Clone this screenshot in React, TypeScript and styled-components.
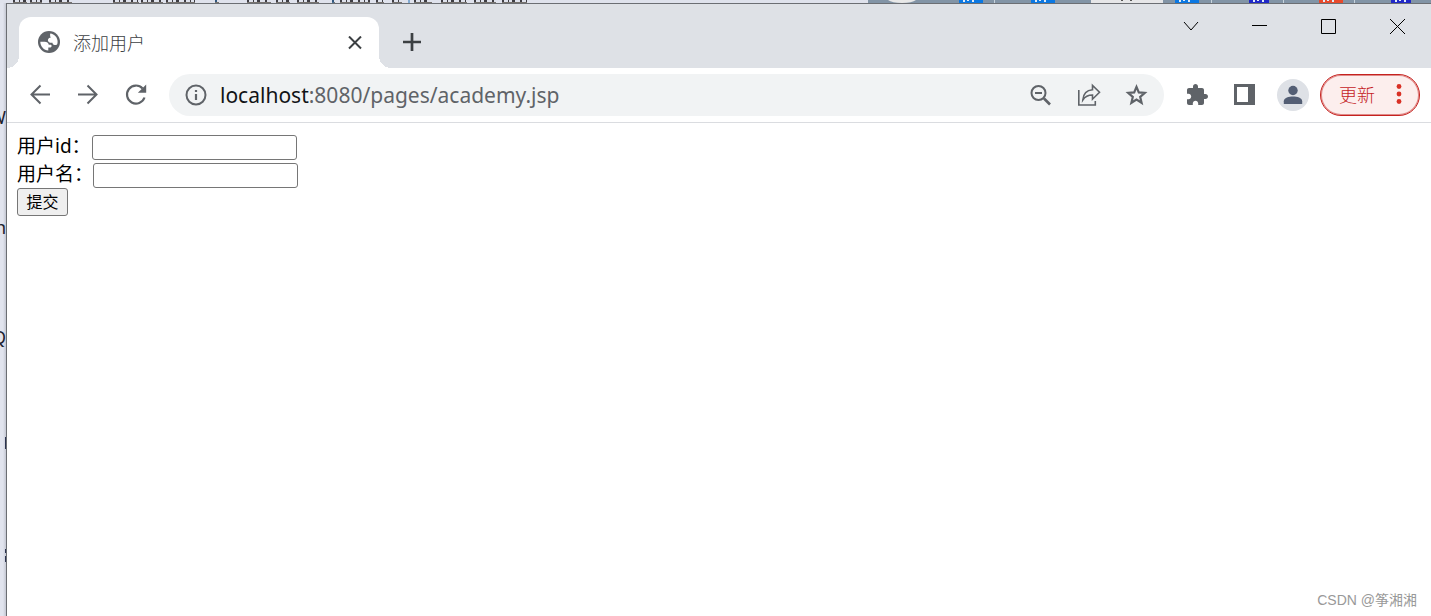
import React from "react";
import styled, { createGlobalStyle } from "styled-components";

const GlobalStyle = createGlobalStyle`
  * { box-sizing: border-box; }
  html, body { margin: 0; }
  body {
    font-family: "Noto Sans", "Noto Sans CJK SC", sans-serif;
    background: #dfe2ec;
  }
  button { font: inherit; }
`;

const Desktop = styled.div`
  min-height: 100vh;
  display: grid;
  grid-template: 3px 1fr / 6px minmax(0, 1fr);
  background: #dfe2ec;
`;

const TopStrip = styled.div`
  grid-column: 1 / -1;
  display: flex;
  justify-content: space-between;
  overflow: hidden;
`;

const StripDrawing = styled.svg`
  display: block;
  height: 3px;
  flex: none;
`;

const SideStrip = styled.div`
  display: flex;
  flex-direction: column;
  align-items: flex-end;
  overflow: hidden;
  padding-top: 100px;
  background: linear-gradient(90deg, #e1e4ee 50%, #c4c7d2);
  color: #1c2230;
  font-size: 18px;
  line-height: 28px;
`;

const SideGlyph = styled.span`
  margin-bottom: 82px;
`;

const SideMarks = styled.svg`
  display: block;
  flex: none;
`;

const Window = styled.div`
  display: flex;
  flex-direction: column;
  min-width: 0;
  border-top: 1px solid #6b6e73;
  border-left: 1px solid #6b6e73;
  background: #fff;
`;

const TabStrip = styled.header`
  display: flex;
  height: 64px;
  padding-left: 12px;
  background: #dee1e6;
`;

const Tab = styled.div`
  position: relative;
  display: flex;
  align-items: center;
  width: 360px;
  height: 51px;
  margin-top: 13px;
  padding: 0 14px 0 18px;
  border-radius: 12px 12px 0 0;
  background: #fff;
  color: #3c4043;

  &::before,
  &::after {
    content: "";
    position: absolute;
    bottom: 0;
    width: 12px;
    height: 12px;
  }
  &::before {
    right: 100%;
    background: radial-gradient(circle at 0 0, transparent 12px, #fff 12px);
  }
  &::after {
    left: 100%;
    background: radial-gradient(circle at 100% 0, transparent 12px, #fff 12px);
  }
`;

const TabTitle = styled.span`
  flex: 1;
  margin-left: 12px;
  font-size: 18px;
  font-weight: 300;
  line-height: 24px;
`;

const IconButton = styled.button<{ $size?: number }>`
  display: flex;
  flex: none;
  align-items: center;
  justify-content: center;
  width: ${(p) => p.$size ?? 32}px;
  height: ${(p) => p.$size ?? 32}px;
  padding: 0;
  border: 0;
  background: none;
  color: #5f6368;
`;

const NewTab = styled(IconButton)`
  margin: 22px 0 0 17px;
  color: #3c4043;
`;

const WindowControls = styled.div`
  display: flex;
  height: 45px;
  margin: 0 -1px 0 auto;
`;

const WindowControl = styled.button`
  display: flex;
  align-items: center;
  justify-content: center;
  width: 69px;
  padding: 0;
  border: 0;
  background: none;
  color: #000;
`;

const Toolbar = styled.nav`
  display: flex;
  align-items: center;
  height: 55px;
  padding: 0 11px 0 17px;
  border-bottom: 1px solid #dadce0;
`;

const NavGroup = styled.div`
  display: flex;
  gap: 16px;
`;

const AddressBar = styled.div`
  display: flex;
  flex: 1;
  align-items: center;
  min-width: 0;
  height: 42px;
  margin: 0 17px;
  padding: 0 11px;
  border-radius: 21px;
  background: #f1f3f4;
`;

const Url = styled.span`
  flex: 1;
  min-width: 0;
  margin-left: 8px;
  overflow: hidden;
  color: #5f6368;
  font-size: 21px;
  line-height: 30px;
  white-space: nowrap;
`;

const Host = styled.span`
  color: #111417;
`;

const Avatar = styled(IconButton)`
  border-radius: 50%;
  background: #dee1e6;
  color: #535e74;
`;

const UpdateButton = styled.button`
  display: flex;
  align-items: center;
  justify-content: space-between;
  width: 100px;
  height: 42px;
  margin-left: 11px;
  padding: 0 17px 2px 18px;
  border: 1px solid #c5221f;
  border-radius: 21px;
  background: #fceeed;
  box-shadow: inset 0 0 0 1px #e08a88;
  color: #c5221f;
  font-size: 18px;
  font-weight: 300;
`;

const Page = styled.main`
  display: flex;
  flex: 1;
  flex-direction: column;
  padding: 12px 14px 4px 10px;
  color: #000;
  font-size: 19px;
`;

const Fields = styled.div`
  display: flex;
  flex-direction: column;
  gap: 3px;
`;

const Row = styled.div`
  display: flex;
`;

const FieldLabel = styled.label<{ $width: number }>`
  width: ${(p) => p.$width}px;
  line-height: 23px;
  white-space: nowrap;
`;

const TextInput = styled.input`
  width: 205px;
  height: 25px;
  padding: 1px 2px;
  border: 1px solid #767676;
  border-radius: 3px;
  background: #fff;
  font: inherit;
  font-size: 16px;
`;

const Submit = styled.button`
  width: 51px;
  height: 28px;
  padding: 0;
  border: 1px solid #767676;
  border-radius: 3px;
  background: #efefef;
  color: #000;
  font-size: 16px;
  line-height: 24px;
`;

const Watermark = styled.footer`
  margin-top: auto;
  align-self: flex-end;
  color: #999;
  font-family: "Liberation Sans", "Noto Sans CJK SC", sans-serif;
  font-size: 14px;
  line-height: 24px;
`;

const textRemnants: [number, number][] = [
  [13, 14], [30, 12], [49, 23], [113, 26], [141, 22], [166, 29],
  [215, 4], [247, 24], [276, 14], [297, 22], [332, 3], [340, 30],
  [376, 8], [392, 10], [414, 18], [441, 26], [474, 22], [502, 25],
];

const favicons: [number, number, string][] = [
  [91, 24, "#0b78e3"], [163, 24, "#0b78e3"], [307, 24, "#0b78e3"],
  [381, 20, "#2028c8"], [451, 24, "#e84a2c"], [523, 20, "#2028c8"],
];

function BackgroundWindows() {
  return (
    <TopStrip aria-hidden="true">
      <StripDrawing width="530" viewBox="0 0 530 3">
        {textRemnants.map(([x, w]) => (
          <g key={x}>
            <path d={`M${x} 2.5h${w}`} stroke="#77736f" />
            <path d={`M${x} 1h${w}`} stroke="#3e3d43" strokeWidth="2" strokeDasharray="2 4 1 3 3 5" />
          </g>
        ))}
        <path d="M333 0v3M216 0v2M409 0v3" stroke="#2473b8" />
      </StripDrawing>
      <StripDrawing width="563" viewBox="0 0 563 3">
        <path d="M0 0h563v3H0z" fill="#8294a6" />
        <path d="M20 0h28q-4 3-14 3T20 0z" fill="#e8e8e8" />
        <path d="M223 0h72v3h-72z" fill="#e6e6e8" />
        {favicons.map(([x, w, fill]) => (
          <g key={x}>
            <path d={`M${x} 0h${w}v3h-${w}z`} fill={fill} />
            <path d={`M${x + 5} 0v2m4-2v1m5-1v2`} stroke="#dfeaf6" strokeWidth="2" />
          </g>
        ))}
        <path d="M126.500 0v3M343.500 0v3M415.500 0v3M486.500 0v3" stroke="#c7d3dc" />
        <path d="M253 .5h2m7 0h2" stroke="#555" />
      </StripDrawing>
    </TopStrip>
  );
}

export default function App() {
  return (
    <>
      <GlobalStyle />
      <Desktop>
        <BackgroundWindows />
        <SideStrip aria-hidden="true">
          <SideGlyph>W</SideGlyph>
          <SideGlyph>n</SideGlyph>
          <SideGlyph>Q</SideGlyph>
          <SideMarks width="6" height="140" viewBox="0 0 6 140">
            <path d="M5.500 4v12M5.500 116v4m0 3v6" stroke="#2b3350" />
          </SideMarks>
        </SideStrip>
        <Window>
          <TabStrip>
            <Tab>
              <svg width="24" height="24" viewBox="0 0 24 24" aria-hidden="true">
                <circle cx="12" cy="11" r="11" fill="#5f6368" />
                <path
                  fill="#fff"
                  d="M13.300 2.500C17.500 3 20.600 6.500 20.600 10.600c0 1-.1 1.800-.4 2.600-.8.700-1.700 1-2.600.800-1.400-.2-2-1-2.100-2.300-1.400.1-2.600 0-3.500-.5-1.100-.7-1.400-2-.8-3.200.5-.9 1.400-1.200 2.500-1.200-.5-1.500-.9-3-.4-4.300zM3.300 10.800h4.300c2.300 0 3.900 1 4.200 3h1.600c.9 0 1.300.6 1.200 1.300-.1 1-.9 1.500-2 1.500h-1.300v3C7 19.300 3.300 15.600 3.300 10.800z"
                />
              </svg>
              <TabTitle>添加用户</TabTitle>
              <IconButton $size={20} aria-label="关闭标签页">
                <svg width="14" height="14" viewBox="0 0 14 14" fill="none" stroke="#3c4043" strokeWidth="2">
                  <path d="m1 .500 12 12M13 .500 1 12.500" />
                </svg>
              </IconButton>
            </Tab>
            <NewTab aria-label="新标签页">
              <svg width="18" height="18" viewBox="0 0 18 18" stroke="currentColor" strokeWidth="2.700">
                <path d="M9 0v18M0 9h18" />
              </svg>
            </NewTab>
            <WindowControls>
              <WindowControl aria-label="搜索标签页">
                <svg width="16" height="16" viewBox="0 0 16 16" fill="none" stroke="currentColor">
                  <path d="m1 3 7 8 7-8" />
                </svg>
              </WindowControl>
              <WindowControl aria-label="最小化">
                <svg width="15" height="15" viewBox="0 0 15 15" stroke="currentColor">
                  <path d="M0 6.500h15" />
                </svg>
              </WindowControl>
              <WindowControl aria-label="最大化">
                <svg width="15" height="15" viewBox="0 0 15 15" fill="none" stroke="currentColor">
                  <path d="M.5.500h14v14H.5z" />
                </svg>
              </WindowControl>
              <WindowControl aria-label="关闭">
                <svg width="15" height="15" viewBox="0 0 15 15" stroke="currentColor">
                  <path d="m0 0 15 15M15 0 0 15" />
                </svg>
              </WindowControl>
            </WindowControls>
          </TabStrip>
          <Toolbar>
            <NavGroup>
              <IconButton aria-label="后退">
                <svg width="22" height="22" viewBox="0 0 22 22" fill="none" stroke="currentColor" strokeWidth="2">
                  <path d="M21 10.500H3M11.500 1.500l-9 9 9 9" />
                </svg>
              </IconButton>
              <IconButton aria-label="前进">
                <svg width="22" height="22" viewBox="0 0 22 22" fill="none" stroke="currentColor" strokeWidth="2">
                  <path d="M1 10.500h18M10.500 1.500l9 9-9 9" />
                </svg>
              </IconButton>
              <IconButton aria-label="重新加载">
                <svg width="24" height="24" viewBox="0 0 24 24">
                  <path d="M20.500 14.500A9 9 0 1 1 18.600 5.400" fill="none" stroke="currentColor" strokeWidth="2.200" />
                  <path d="M22.200 1.500v8.300h-8.300z" fill="currentColor" />
                </svg>
              </IconButton>
            </NavGroup>
            <AddressBar>
              <IconButton aria-label="网站信息">
                <svg width="22" height="22" viewBox="0 0 22 22" fill="none" stroke="currentColor" strokeWidth="2">
                  <circle cx="11" cy="11" r="9.500" />
                  <path d="M11 10v6M11 6v2" strokeWidth="2.200" />
                </svg>
              </IconButton>
              <Url>
                <Host>localhost</Host>:8080/pages/academy.jsp
              </Url>
              <NavGroup>
                <IconButton aria-label="缩放">
                  <svg width="22" height="22" viewBox="0 0 22 22" fill="none" stroke="currentColor" strokeWidth="2">
                    <circle cx="8.500" cy="9" r="7" />
                    <path d="M5 9h7" />
                    <path d="m14 14.500 6 6" strokeWidth="2.600" />
                  </svg>
                </IconButton>
                <IconButton aria-label="分享">
                  <svg width="24" height="24" viewBox="0 0 24 24" fill="none" stroke="currentColor" strokeWidth="1.600">
                    <path d="M1.800 7v15h16.500v-4" />
                    <path d="M15.500 2.500v4.200C9 7.200 6.200 11 5.800 17c2.200-3.400 5.200-5 9.700-5v4.200l7-6.900z" />
                  </svg>
                </IconButton>
                <IconButton aria-label="为此标签页添加书签">
                  <svg width="24" height="24" viewBox="0 0 24 24" fill="none" stroke="currentColor" strokeWidth="2.200">
                    <path d="m11.500 3.800 2.300 5.600 6 .5-4.600 4 1.400 5.900-5.100-3.200-5.100 3.200 1.400-5.900-4.600-4 6-.5z" />
                  </svg>
                </IconButton>
              </NavGroup>
            </AddressBar>
            <NavGroup>
              <IconButton aria-label="扩展程序">
                <svg width="24" height="24" viewBox="0 0 24 24" fill="currentColor">
                  <path d="M20.500 11H19V7c0-1.100-.9-2-2-2h-4V3.500C13 2.120 11.880 1 10.500 1S8 2.120 8 3.500V5H4c-1.100 0-1.990.9-1.990 2v3.800H3.500c1.490 0 2.700 1.210 2.700 2.700s-1.210 2.700-2.700 2.700H2V20c0 1.100.9 2 2 2h3.800v-1.500c0-1.490 1.210-2.700 2.700-2.700s2.700 1.210 2.700 2.700V22H17c1.100 0 2-.9 2-2v-4h1.500c1.380 0 2.500-1.120 2.500-2.500S21.880 11 20.500 11z" />
                </svg>
              </IconButton>
              <IconButton aria-label="侧边栏">
                <svg width="22" height="22" viewBox="0 0 22 22" fill="currentColor">
                  <path fillRule="evenodd" d="M0 0h21v21H0zM3 3v15h11V3z" />
                </svg>
              </IconButton>
              <Avatar aria-label="用户">
                <svg width="20" height="20" viewBox="0 0 20 20" fill="currentColor">
                  <circle cx="10" cy="5.500" r="4.700" />
                  <path d="M.800 19v-2.700c0-3.500 5.200-4.800 9.200-4.800s9.200 1.300 9.200 4.800V19z" />
                </svg>
              </Avatar>
            </NavGroup>
            <UpdateButton>
              更新
              <svg width="6" height="20" viewBox="0 0 6 20" fill="#d93025" aria-hidden="true">
                <circle cx="3" cy="2.500" r="2.400" />
                <circle cx="3" cy="10" r="2.400" />
                <circle cx="3" cy="17.500" r="2.400" />
              </svg>
            </UpdateButton>
          </Toolbar>
          <Page>
            <Fields>
              <Row>
                <FieldLabel htmlFor="user-id" $width={75}>用户id：</FieldLabel>
                <TextInput id="user-id" type="text" />
              </Row>
              <Row>
                <FieldLabel htmlFor="user-name" $width={76}>用户名：</FieldLabel>
                <TextInput id="user-name" type="text" />
              </Row>
            </Fields>
            <Submit type="submit">提交</Submit>
            <Watermark>CSDN @筝湘湘</Watermark>
          </Page>
        </Window>
      </Desktop>
    </>
  );
}
